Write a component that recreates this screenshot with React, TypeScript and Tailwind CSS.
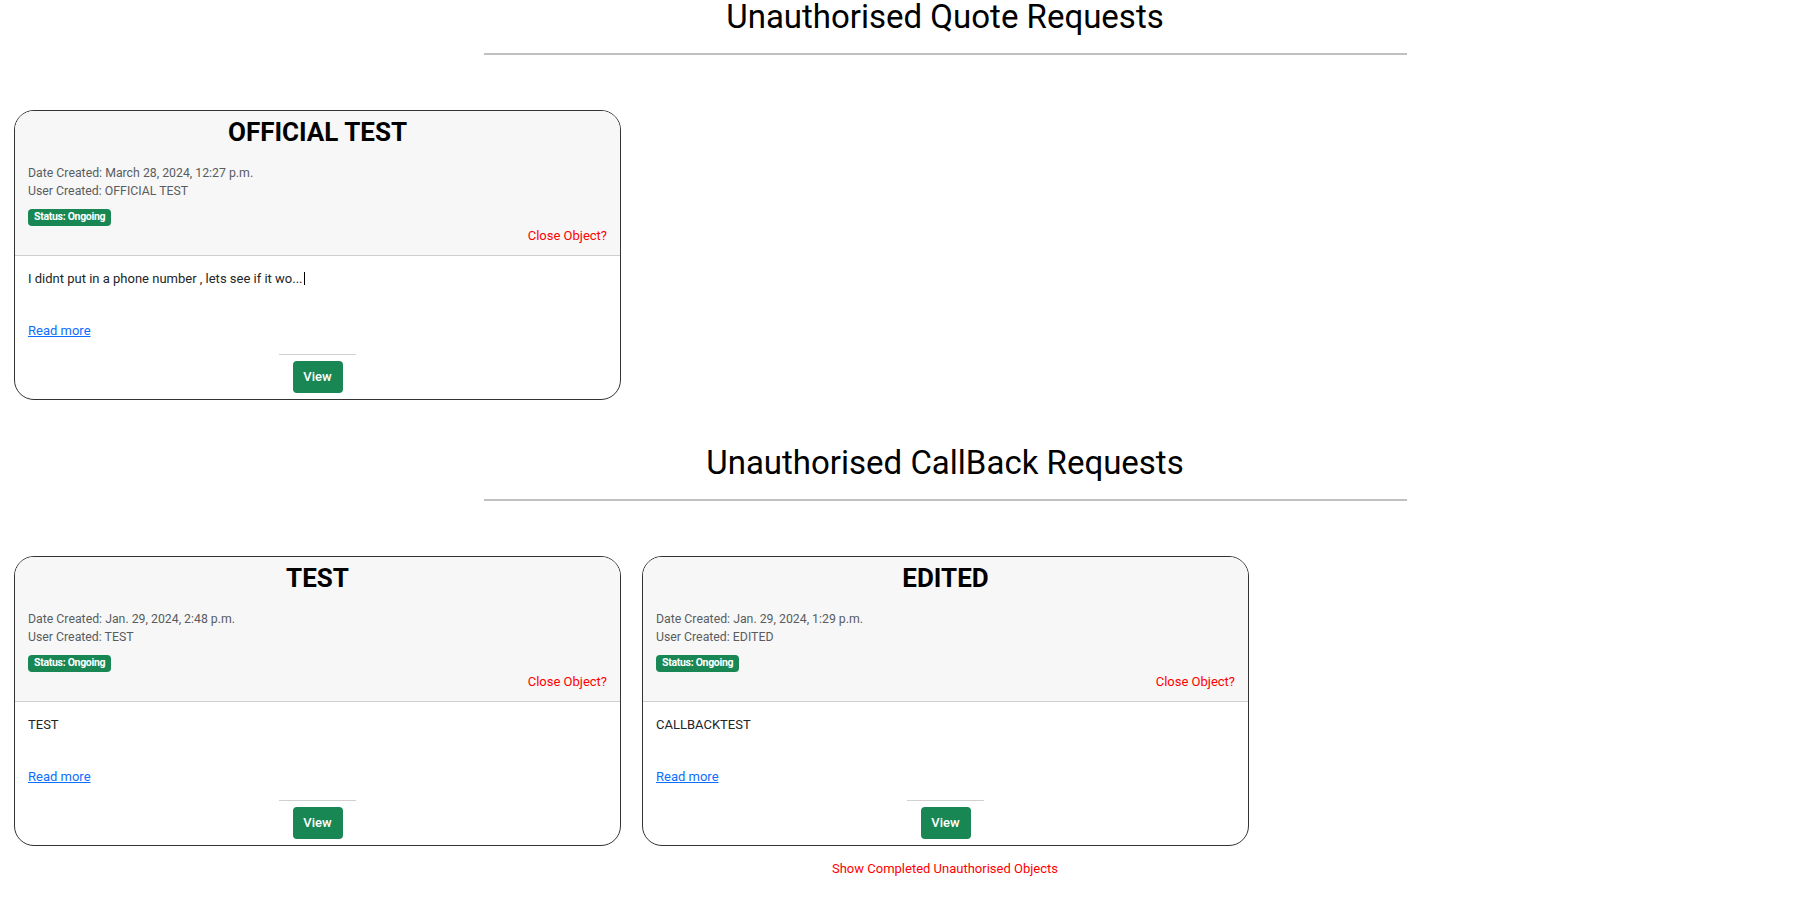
import React from "react";

interface RequestItem {
  title: string;
  created: string;
  user: string;
  text: string;
  caret?: boolean;
}

const quotes: RequestItem[] = [
  {
    title: "OFFICIAL TEST",
    created: "March 28, 2024, 12:27 p.m.",
    user: "OFFICIAL TEST",
    text: "I didnt put in a phone number , lets see if it wo...",
    caret: true,
  },
];

const callbacks: RequestItem[] = [
  {
    title: "TEST",
    created: "Jan. 29, 2024, 2:48 p.m.",
    user: "TEST",
    text: "TEST",
  },
  {
    title: "EDITED",
    created: "Jan. 29, 2024, 1:29 p.m.",
    user: "EDITED",
    text: "CALLBACKTEST",
  },
];

function SectionHeading({ title }: { title: string }) {
  return (
    <div className="ml-[91px] flex flex-col items-center">
      <h2 className="text-[33px] leading-[33px] font-normal text-black">
        {title}
      </h2>
      <div className="mt-[20px] h-[2px] w-[923px] bg-[#c0c0c0]" />
    </div>
  );
}

function RequestCard({ item }: { item: RequestItem }) {
  return (
    <div className="w-[607px] h-[290px] flex flex-col overflow-hidden rounded-[20px] border border-[#333] bg-white">
      <div className="bg-[#f7f7f7] border-b border-[#cfcfcf] px-[13px] pt-[6px] pb-[9px]">
        <h3 className="text-center text-[26px] leading-[31px] font-bold text-black">
          {item.title}
        </h3>
        <div className="mt-[16px] text-[12.3px] leading-[18px] text-[#595c5f]">
          <div>Date Created: {item.created}</div>
          <div>User Created: {item.user}</div>
        </div>
        <div className="mt-[9px] flex">
          <span className="h-[17px] flex items-center rounded-[4px] bg-[#198754] px-[6px] text-[10.5px] font-bold leading-none tracking-[-0.3px] text-white">
            Status: Ongoing
          </span>
        </div>
        <div className="text-right text-[13px] leading-[19.5px] text-[#ff0000]">
          Close Object?
        </div>
      </div>
      <div className="flex flex-1 flex-col px-[13px] pt-[13px]">
        <p className="text-[13px] leading-[19.5px] text-[#212529]">
          {item.text}
          {item.caret && (
            <span className="ml-px inline-block h-[13px] w-px bg-black align-[-2px]" />
          )}
        </p>
        <a
          href="#"
          className="mt-[33px] self-start text-[13px] leading-[19.5px] text-[#0d6efd] underline"
        >
          Read more
        </a>
        <div className="mt-[13px] flex flex-col items-center">
          <div className="h-px w-[77px] bg-[#d0d0d0]" />
          <button className="mt-[6px] h-[32px] w-[50px] rounded-[4px] bg-[#198754] text-[13px] font-medium text-white">
            View
          </button>
        </div>
      </div>
    </div>
  );
}

export default function App() {
  return (
    <div
      className="min-h-screen bg-white pb-[30px]"
      style={{ fontFamily: "Roboto, 'Liberation Sans', sans-serif" }}
    >
      <SectionHeading title="Unauthorised Quote Requests" />
      <div className="mt-[55px] flex gap-[21px] pl-[14px]">
        {quotes.map((q) => (
          <RequestCard key={q.title} item={q} />
        ))}
      </div>

      <div className="mt-[46px]">
        <SectionHeading title="Unauthorised CallBack Requests" />
      </div>
      <div className="mt-[55px] flex gap-[21px] pl-[14px]">
        {callbacks.map((c) => (
          <RequestCard key={c.title} item={c} />
        ))}
      </div>

      <div className="ml-[91px] mt-[13px] flex justify-center">
        <a href="#" className="text-[13px] leading-[19.5px] text-[#ff0000]">
          Show Completed Unauthorised Objects
        </a>
      </div>
    </div>
  );
}
